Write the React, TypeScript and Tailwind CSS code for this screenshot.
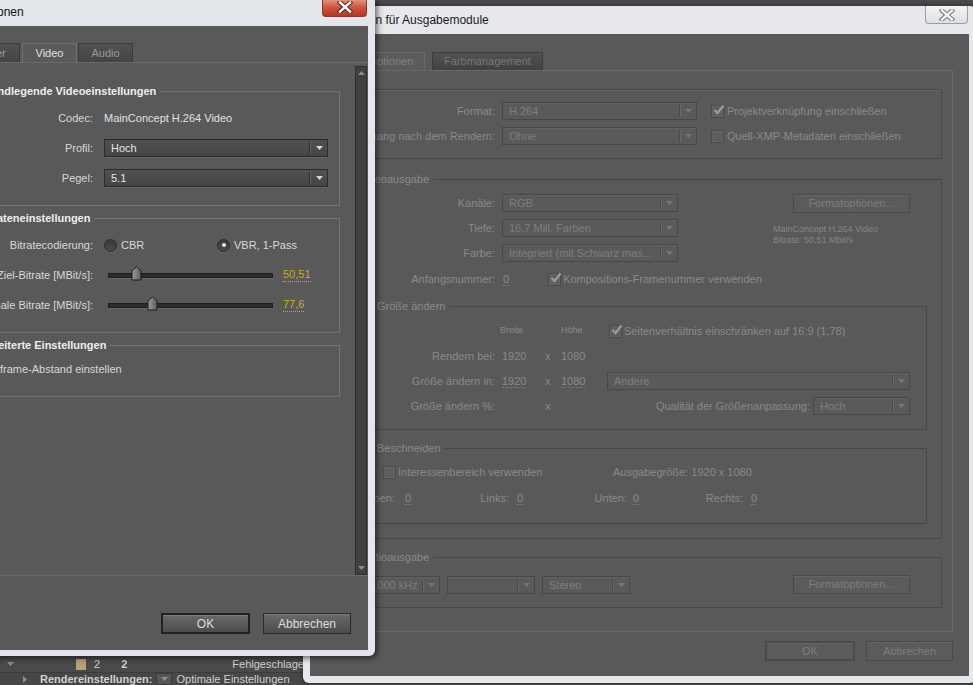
import React from 'react';

// --- small drawing helpers -------------------------------------------------

function Arrow({ color, dir = 'down' }: { color: string; dir?: 'down' | 'up' | 'right' }) {
  const d = dir === 'down' ? 'M0 0h7L3.5 4z' : dir === 'up' ? 'M0 4h7L3.5 0z' : 'M0 0v7l4-3.5z';
  const w = dir === 'right' ? 4 : 7;
  const h = dir === 'right' ? 7 : 4;
  return (
    <svg width={w} height={h} viewBox={`0 0 ${w} ${h}`}>
      <path d={d} fill={color} />
    </svg>
  );
}

function CloseX({ fill, stroke }: { fill: string; stroke: string }) {
  return (
    <svg width="16" height="12" viewBox="0 0 16 12">
      <path d="M3 1.5 L13 10.5 M13 1.5 L3 10.5" stroke={stroke} strokeWidth="4.6" strokeLinecap="square" />
      <path d="M3 1.5 L13 10.5 M13 1.5 L3 10.5" stroke={fill} strokeWidth="2.4" strokeLinecap="square" />
    </svg>
  );
}

// --- back (inactive) dialog widgets ----------------------------------------

function DimSelect({ value, className = '' }: { value: string; className?: string }) {
  return (
    <div className={`flex h-[18px] items-stretch border border-[#474747] bg-[#5a5a5a] shadow-[inset_0_1px_0_#626262] ${className}`}>
      <span className="flex-1 overflow-hidden whitespace-nowrap pl-[6px] leading-[16px] text-[#7e7e7e]">{value}</span>
      <span className="my-[2px] w-[1px] bg-[#4a4a4a]" />
      <span className="my-[2px] w-[1px] bg-[#686868]" />
      <span className="flex w-[15px] items-center justify-center">
        <Arrow color="#767676" />
      </span>
    </div>
  );
}

function DimCheck({ checked = false }: { checked?: boolean }) {
  return (
    <span className="relative flex h-[13px] w-[13px] shrink-0 items-center justify-center border border-[#4a4a4a] bg-[#5e5e5e] shadow-[inset_0_0_0_1px_#656565]">
      {checked && (
        <svg width="12" height="11" viewBox="0 0 12 11" className="absolute -top-[2px] left-[1px]">
          <path d="M1.5 6 L4.5 9 L10.5 1.5" stroke="#9c9c9c" strokeWidth="2.2" fill="none" />
        </svg>
      )}
    </span>
  );
}

function DimButton({ label, className = '' }: { label: string; className?: string }) {
  return (
    <div className={`flex items-center justify-center border border-[#4a4a4a] bg-[#5b5b5b] text-[#7e7e7e] shadow-[inset_0_1px_0_#656565] ${className}`}>
      {label}
    </div>
  );
}

function DimValue({ v }: { v: string }) {
  return <span className="border-b border-dotted border-[#7e7e7e] leading-[12px] text-[#8c8c8c]">{v}</span>;
}

// --- front (active) dialog widgets ----------------------------------------

function DarkSelect({ value }: { value: string }) {
  return (
    <div className="flex h-[18px] w-[224px] items-stretch border border-[#2b2b2b] bg-gradient-to-b from-[#505050] to-[#454545] shadow-[0_1px_0_#666666]">
      <span className="flex-1 pl-[6px] leading-[16px] text-[#e6e6e6]">{value}</span>
      <span className="my-[2px] w-[1px] bg-[#2e2e2e]" />
      <span className="my-[2px] w-[1px] bg-[#626262]" />
      <span className="flex w-[16px] items-center justify-center">
        <Arrow color="#d6d6d6" />
      </span>
    </div>
  );
}

function Radio({ on = false }: { on?: boolean }) {
  return (
    <span className="flex h-[13px] w-[13px] items-center justify-center rounded-full border border-[#2a2a2a] bg-gradient-to-b from-[#3a3a3a] to-[#4a4a4a] shadow-[0_1px_0_#6a6a6a]">
      {on && <span className="h-[4px] w-[4px] rounded-full bg-[#e8e8e8]" />}
    </span>
  );
}

function Slider({ thumb, value }: { thumb: number; value: string }) {
  return (
    <div className="flex items-center">
      <div className="relative ml-[4px] h-[5px] w-[165px] border border-[#1e1e1e] bg-[#2c2c2c] shadow-[0_1px_0_#6a6a6a]">
        <svg width="11" height="15" viewBox="0 0 11 15" className="absolute -top-[8px]" style={{ left: thumb - 5 }}>
          <defs>
            <linearGradient id={`g${thumb}`} x1="0" x2="1">
              <stop offset="0" stopColor="#9a9a9a" />
              <stop offset="1" stopColor="#5e5e5e" />
            </linearGradient>
          </defs>
          <path d="M1 5 L5.5 0.8 L10 5 V14 H1 Z" fill={`url(#g${thumb})`} stroke="#1c1c1c" />
        </svg>
      </div>
      <span className="ml-[10px] border-b border-dotted border-[#d9a526] leading-[13px] text-[#d9a526]">{value}</span>
    </div>
  );
}

function DarkButton({ label, primary = false }: { label: string; primary?: boolean }) {
  return (
    <div
      className={`flex h-[21px] items-center justify-center bg-gradient-to-b from-[#6a6a6a] to-[#4c4c4c] text-[12px] text-[#dedede] shadow-[inset_0_1px_0_#7a7a7a] ${
        primary ? 'w-[89px] border-2 border-[#222222]' : 'w-[88px] border border-[#2a2a2a]'
      }`}
    >
      {label}
    </div>
  );
}

function Row({ label, children }: { label: string; children: React.ReactNode }) {
  return (
    <div className="flex h-[18px] items-center">
      <span className="w-[125px] shrink-0 whitespace-nowrap text-right">{label}</span>
      <div className="ml-[11px] flex items-center">{children}</div>
    </div>
  );
}

function Group({ title, h, pt, children }: { title: string; h: string; pt: string; children?: React.ReactNode }) {
  return (
    <fieldset className={`w-[373px] border border-[#747474] ${h}`}>
      <legend className="ml-[6px] px-[4px] text-[11px] font-bold leading-[14px] text-[#eeeeee]">{title}</legend>
      <div className={`flex flex-col gap-[12px] ${pt}`}>{children}</div>
    </fieldset>
  );
}

// --- render queue rows under the dialogs -----------------------------------

function QueueRows() {
  return (
    <div className="absolute left-0 top-[656px] w-[310px] text-[11px] text-[#d2d2d2]">
      <div className="flex h-[17px] items-center border-b border-[#3c3c3c] bg-[#4a4a4a]">
        <span className="ml-[7px] flex w-[8px]">
          <Arrow color="#8e8e8e" />
        </span>
        <span className="ml-[62px] h-[11px] w-[11px] bg-[#b7a27a]" />
        <span className="ml-[8px]">2</span>
        <span className="ml-[21px] font-bold">2</span>
        <span className="ml-[105px] whitespace-nowrap">Fehlgeschlagen</span>
      </div>
      <div className="flex h-[12px] items-center bg-[#474747]">
        <span className="ml-[23px] flex">
          <Arrow color="#8e8e8e" dir="right" />
        </span>
        <span className="ml-[13px] whitespace-nowrap font-bold">Rendereinstellungen:</span>
        <span className="ml-[4px] flex h-[12px] w-[16px] items-center justify-center border border-[#3a3a3a] bg-[#555555]">
          <Arrow color="#8e8e8e" />
        </span>
        <span className="ml-[4px] whitespace-nowrap">Optimale Einstellungen</span>
      </div>
    </div>
  );
}

// --- back dialog: output module settings -----------------------------------

function OutputModuleWindow() {
  return (
    <div className="absolute left-[303px] top-[6px] flex h-[677px] w-[673px] flex-col rounded-[6px] bg-[#e6e8eb] px-[7px] pb-[7px] shadow-[0_0_5px_rgba(0,0,0,0.5)]">
      <div className="relative flex h-[28px] items-center">
        <span className="whitespace-nowrap text-[12px] text-[#1a1a1a]">Einstellungen für Ausgabemodule</span>
        <div className="absolute right-[1px] top-0 flex h-[18px] w-[43px] items-center justify-center rounded-b-[4px] border border-t-0 border-[#9a9fa6] bg-gradient-to-b from-[#f4f4f4] to-[#dcdfe3]">
          <CloseX fill="#f4f4f4" stroke="#7a7f86" />
        </div>
      </div>

      <div className="flex flex-1 flex-col bg-[#595959] text-[11px] text-[#8a8a8a]">
        {/* tabs */}
        <div className="ml-[20px] mt-[18px] flex h-[18px] gap-[7px]">
          <div className="flex w-[95px] items-center justify-center border border-b-0 border-[#6a6a6a] bg-[#5b5b5b] text-[#828282]">
            Hauptoptionen
          </div>
          <div className="flex w-[111px] items-center justify-center border border-b-0 border-[#3d3d3d] bg-gradient-to-b from-[#525252] to-[#414141] text-[#777777]">
            Farbmanagement
          </div>
        </div>

        {/* tab panel */}
        <div className="ml-[10px] flex h-[562px] w-[633px] flex-col border border-[#6a6a6a] pl-[11px]">
          <div className="mt-[18px] flex h-[70px] w-[610px] flex-col gap-[7px] border border-[#474747] pt-[12px] shadow-[inset_0_1px_0_#636363]">
            <div className="flex h-[18px] items-center">
              <span className="w-[162px] whitespace-nowrap text-right">Format:</span>
              <DimSelect value="H.264" className="ml-[7px] w-[195px]" />
              <span className="ml-[14px]">
                <DimCheck checked />
              </span>
              <span className="ml-[3px] whitespace-nowrap">Projektverknüpfung einschließen</span>
            </div>
            <div className="flex h-[18px] items-center">
              <span className="w-[162px] whitespace-nowrap text-right">Vorgang nach dem Rendern:</span>
              <DimSelect value="Ohne" className="ml-[7px] w-[195px]" />
              <span className="ml-[14px]">
                <DimCheck />
              </span>
              <span className="ml-[3px] whitespace-nowrap">Quell-XMP-Metadaten einschließen</span>
            </div>
          </div>

          {/* Videoausgabe */}
          <fieldset className="mt-[13px] h-[367px] w-[610px] border border-[#474747]">
            <legend className="ml-[22px] px-[4px] leading-[14px]">Videoausgabe</legend>
            <div className="flex pt-[8px]">
              <div className="flex flex-col gap-[7px]">
                <div className="flex h-[18px] items-center">
                  <span className="w-[162px] text-right">Kanäle:</span>
                  <DimSelect value="RGB" className="ml-[7px] w-[176px]" />
                </div>
                <div className="flex h-[18px] items-center">
                  <span className="w-[162px] text-right">Tiefe:</span>
                  <DimSelect value="16,7 Mill. Farben" className="ml-[7px] w-[176px]" />
                </div>
                <div className="flex h-[18px] items-center">
                  <span className="w-[162px] text-right">Farbe:</span>
                  <DimSelect value="Integriert (mit Schwarz mas..." className="ml-[7px] w-[176px]" />
                </div>
              </div>
              <div className="ml-[95px] flex flex-col">
                <DimButton label="Formatoptionen..." className="ml-[20px] h-[19px] w-[117px]" />
                <div className="mt-[11px] text-[9px] leading-[11px] text-[#868686]">
                  MainConcept H.264 Video
                  <br />
                  Bitrate: 50,51 Mbit/s
                </div>
              </div>
            </div>
            <div className="mt-[8px] flex h-[18px] items-center">
              <span className="w-[162px] text-right">Anfangsnummer:</span>
              <span className="ml-[8px]">
                <DimValue v="0" />
              </span>
              <span className="ml-[39px]">
                <DimCheck checked />
              </span>
              <span className="ml-[2px] whitespace-nowrap">Kompositions-Framenummer verwenden</span>
            </div>

            {/* Größe ändern */}
            <fieldset className="ml-[11px] mt-[11px] h-[131px] w-[583px] border border-[#474747]">
              <legend className="ml-[28px] px-[4px] leading-[14px]">Größe ändern</legend>
              <div className="flex flex-col gap-[7px] pt-[9px]">
                <div className="flex h-[18px] items-center">
                  <span className="w-[150px]" />
                  <span className="ml-[5px] w-[45px] text-[9px]">Breite</span>
                  <span className="w-[16px]" />
                  <span className="w-[46px] text-[9px]">Höhe</span>
                  <span className="ml-[2px]">
                    <DimCheck checked />
                  </span>
                  <span className="ml-[2px] whitespace-nowrap">Seitenverhältnis einschränken auf 16:9 (1,78)</span>
                </div>
                <div className="flex h-[18px] items-center">
                  <span className="w-[150px] text-right">Rendern bei:</span>
                  <span className="ml-[7px] w-[43px]">1920</span>
                  <span className="w-[16px]">x</span>
                  <span className="w-[46px]">1080</span>
                </div>
                <div className="flex h-[18px] items-center">
                  <span className="w-[150px] text-right">Größe ändern in:</span>
                  <span className="ml-[7px] w-[43px]">
                    <DimValue v="1920" />
                  </span>
                  <span className="w-[16px]">x</span>
                  <span className="w-[46px]">
                    <DimValue v="1080" />
                  </span>
                  <DimSelect value="Andere" className="w-[303px]" />
                </div>
                <div className="flex h-[18px] items-center">
                  <span className="w-[150px] text-right">Größe ändern %:</span>
                  <span className="ml-[7px] w-[43px]" />
                  <span className="w-[16px]">x</span>
                  <span className="w-[46px]" />
                  <span className="w-[203px] whitespace-nowrap text-right">Qualität der Größenanpassung:</span>
                  <DimSelect value="Hoch" className="ml-[3px] w-[97px]" />
                </div>
              </div>
            </fieldset>

            {/* Beschneiden */}
            <fieldset className="ml-[11px] mt-[11px] h-[83px] w-[583px] border border-[#474747]">
              <legend className="ml-[28px] px-[4px] leading-[14px]">Beschneiden</legend>
              <div className="flex flex-col gap-[8px] pt-[8px]">
                <div className="flex h-[18px] items-center">
                  <span className="ml-[38px]">
                    <DimCheck />
                  </span>
                  <span className="ml-[2px] w-[215px] whitespace-nowrap">Interessenbereich verwenden</span>
                  <span className="whitespace-nowrap">Ausgabegröße: 1920 x 1080</span>
                </div>
                <div className="flex h-[18px] items-center">
                  <span className="w-[50px] text-right">Oben:</span>
                  <span className="ml-[10px] w-[6px]">
                    <DimValue v="0" />
                  </span>
                  <span className="w-[98px] text-right">Links:</span>
                  <span className="ml-[8px] w-[6px]">
                    <DimValue v="0" />
                  </span>
                  <span className="w-[104px] text-right">Unten:</span>
                  <span className="ml-[6px] w-[6px]">
                    <DimValue v="0" />
                  </span>
                  <span className="w-[104px] text-right">Rechts:</span>
                  <span className="ml-[8px] w-[6px]">
                    <DimValue v="0" />
                  </span>
                </div>
              </div>
            </fieldset>
          </fieldset>

          {/* Audioausgabe */}
          <fieldset className="mt-[11px] h-[58px] w-[610px] border border-[#474747]">
            <legend className="ml-[22px] px-[4px] leading-[14px]">Audioausgabe</legend>
            <div className="flex items-center pt-[11px]">
              <DimSelect value="48.000 kHz" className="ml-[22px] w-[85px]" />
              <DimSelect value="" className="ml-[7px] w-[88px]" />
              <DimSelect value="Stereo" className="ml-[7px] w-[88px]" />
              <DimButton label="Formatoptionen..." className="ml-[163px] h-[19px] w-[117px]" />
            </div>
          </fieldset>
        </div>

        <div className="mt-[9px] flex justify-end gap-[11px] pr-[16px]">
          <DimButton label="OK" className="h-[20px] w-[90px] border-2 border-[#4a4a4a]" />
          <DimButton label="Abbrechen" className="h-[20px] w-[87px]" />
        </div>
      </div>
    </div>
  );
}

// --- front dialog: H.264 options -------------------------------------------

function H264Window() {
  return (
    <div className="absolute left-[-48px] top-[-2px] flex h-[658px] w-[423px] flex-col rounded-b-[6px] bg-[#e3e6ea] px-[7px] pb-[6px] shadow-[2px_2px_6px_rgba(0,0,0,0.6)]">
      <div className="relative flex h-[28px] items-center">
        <span className="-ml-[20px] whitespace-nowrap text-[12px] text-[#111111]">H.264-Optionen</span>
        <div className="absolute right-[1px] top-0 flex h-[19px] w-[45px] items-center justify-center rounded-b-[4px] border border-t-0 border-[#8a3a2e] bg-gradient-to-b from-[#e8a292] via-[#d0563f] to-[#b8351f]">
          <CloseX fill="#ffffff" stroke="#5a2a22" />
        </div>
      </div>

      <div className="flex flex-1 flex-col bg-[#595959] text-[11px] text-[#d8d8d8]">
        {/* tabs */}
        <div className="ml-[8px] mt-[17px] flex h-[19px]">
          <div className="flex w-[53px] items-center justify-center border border-b-0 border-[#3a3a3a] bg-gradient-to-b from-[#525252] to-[#444444] text-[#9a9a9a]">
            Filter
          </div>
          <div className="ml-[2px] flex w-[55px] items-center justify-center border border-b-0 border-[#707070] bg-[#5a5a5a] text-[#e0e0e0]">
            Video
          </div>
          <div className="ml-[1px] flex w-[55px] items-center justify-center border border-b-0 border-[#3a3a3a] bg-gradient-to-b from-[#525252] to-[#444444] text-[#9a9a9a]">
            Audio
          </div>
        </div>

        {/* scrolling settings panel */}
        <div className="flex h-[514px] border-y border-[#6a6a6a]">
          <div className="flex flex-1 flex-col gap-[5px] pl-[8px] pt-[21px]">
            <Group title="Grundlegende Videoeinstellungen" h="h-[122px]" pt="pt-[11px]">
              <Row label="Codec:">
                <span className="text-[#e2e2e2]">MainConcept H.264 Video</span>
              </Row>
              <Row label="Profil:">
                <DarkSelect value="Hoch" />
              </Row>
              <Row label="Pegel:">
                <DarkSelect value="5.1" />
              </Row>
            </Group>

            <Group title="Bitrateneinstellungen" h="h-[122px]" pt="pt-[11px]">
              <Row label="Bitratecodierung:">
                <span className="flex w-[113px] items-center gap-[4px]">
                  <Radio />
                  CBR
                </span>
                <span className="flex items-center gap-[4px]">
                  <Radio on />
                  VBR, 1-Pass
                </span>
              </Row>
              <Row label="Ziel-Bitrate [MBit/s]:">
                <Slider thumb={27} value="50,51" />
              </Row>
              <Row label="Maximale Bitrate [MBit/s]:">
                <Slider thumb={43} value="77,6" />
              </Row>
            </Group>

            <Group title="Erweiterte Einstellungen" h="h-[59px]" pt="pt-[8px]">
              <div className="flex h-[18px] items-center">
                <span className="ml-[13px] whitespace-nowrap">Keyframe-Abstand einstellen</span>
              </div>
            </Group>
          </div>

          <div className="mr-[1px] mt-[3px] flex w-[12px] flex-col items-center justify-between border border-[#2e2e2e] bg-[#404040] py-[4px]">
            <Arrow color="#8c8c8c" dir="up" />
            <Arrow color="#8c8c8c" />
          </div>
        </div>

        <div className="flex flex-1 items-start justify-end gap-[13px] pr-[17px] pt-[37px]">
          <DarkButton label="OK" primary />
          <DarkButton label="Abbrechen" />
        </div>
      </div>
    </div>
  );
}

export default function App() {
  return (
    <div className="relative h-[685px] w-[973px] overflow-hidden bg-[#4b4b4b] font-['Liberation_Sans',Arial,sans-serif]">
      <QueueRows />
      <OutputModuleWindow />
      <H264Window />
    </div>
  );
}
